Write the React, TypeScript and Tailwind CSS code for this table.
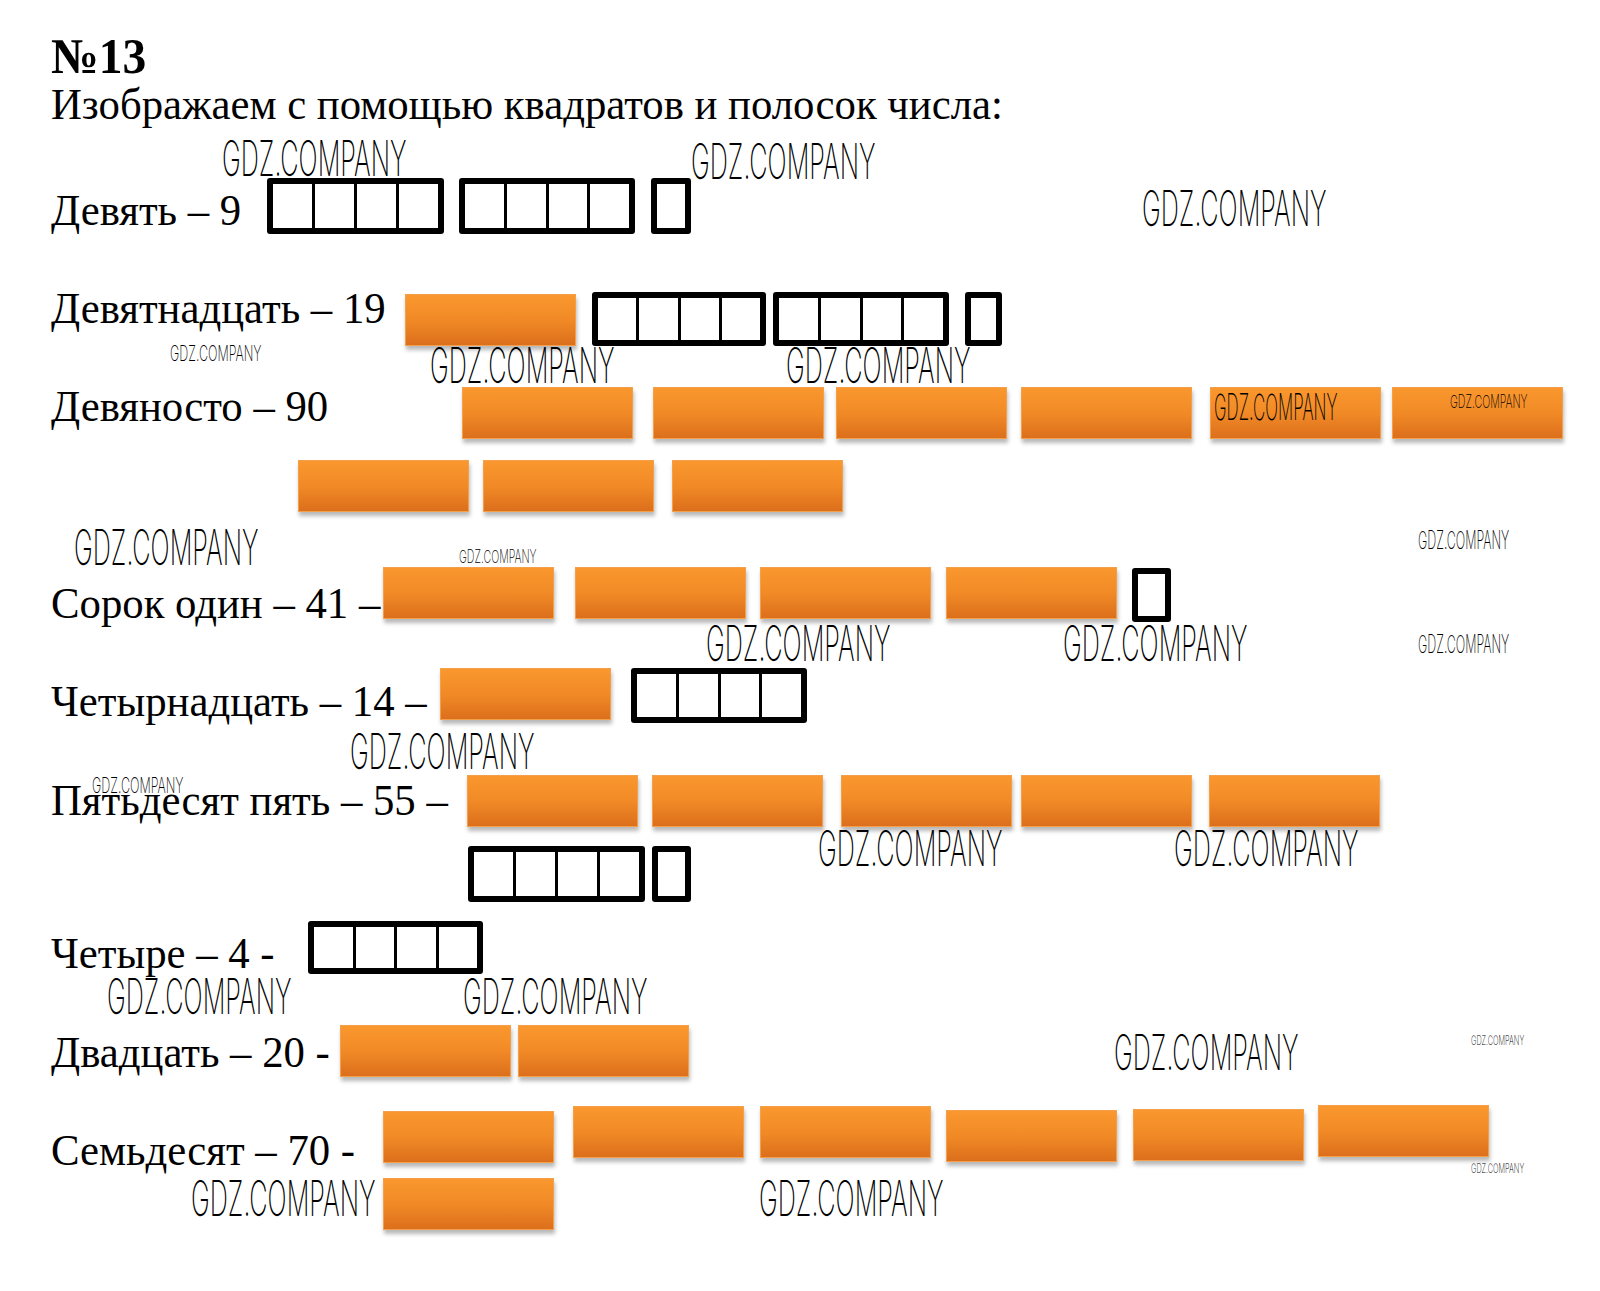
import React from "react";

const serif = "font-['Liberation_Serif',serif]";

const Bar = ({ cls = "" }: { cls?: string }) => (
  <div
    className={`h-[52px] w-[171px] shrink-0 border border-[#f4a04a] bg-linear-to-b from-[#fa972e] via-[#f18a26] to-[#dc6f1c] shadow-[1px_4px_4px_rgba(0,0,0,0.28)] ${cls}`}
  />
);

const Cells = ({ n, cls = "" }: { n: number; cls?: string }) => (
  <div className={`flex shrink-0 rounded-[3px] border-[6px] border-black bg-white ${cls}`}>
    {Array.from({ length: n }).map((_, i) => (
      <div key={i} className={i > 0 ? "flex-1 border-l-[3px] border-black" : "flex-1"} />
    ))}
  </div>
);

const Label = ({ children, cls = "" }: { children: React.ReactNode; cls?: string }) => (
  <div className={`shrink-0 whitespace-nowrap text-[45px] leading-none ${serif} ${cls}`}>
    <div className="origin-left scale-x-[0.95]">{children}</div>
  </div>
);

type V = "L" | "M" | "S" | "S2" | "XS" | "XXS";
const vcls: Record<V, string> = {
  L: "text-[49px] scale-x-[0.516]",
  M: "text-[36px] scale-x-[0.47]",
  S: "text-[22px] scale-x-[0.57]",
  S2: "text-[25px] scale-x-[0.5]",
  XS: "text-[18px] scale-x-[0.59]",
  XXS: "text-[13px] scale-x-[0.56]",
};

const Wm = ({ v, pos }: { v: V; pos: string }) => (
  <div
    className={`pointer-events-none absolute origin-left whitespace-nowrap font-['Inter',sans-serif] font-extralight leading-none text-black ${vcls[v]} ${pos}`}
  >
    GDZ.COMPANY
  </div>
);

export default function App() {
  return (
    <div className="relative h-[1291px] w-[1600px] overflow-hidden bg-white pl-[51px] pt-[31px] text-black">
      <div className={`h-[50px] origin-left scale-x-[0.95] text-[50px] font-bold leading-none ${serif}`}>№13</div>
      <div className={`mt-[1px] origin-left scale-x-[0.95] text-[45px] leading-none ${serif}`}>
        Изображаем с помощью квадратов и полосок числа:
      </div>

      {/* Девять */}
      <div className="mt-[51px] flex items-start">
        <Label cls="mt-[10px] w-[216px]">Девять – 9</Label>
        <Cells n={4} cls="h-[56px] w-[177px]" />
        <Cells n={4} cls="ml-[15px] h-[56px] w-[176px]" />
        <Cells n={1} cls="ml-[16px] h-[56px] w-[40px]" />
      </div>

      {/* Девятнадцать */}
      <div className="mt-[52px] flex items-start">
        <Label cls="w-[354px]">Девятнадцать – 19</Label>
        <Bar cls="mt-[8px]" />
        <Cells n={4} cls="ml-[16px] mt-[6px] h-[54px] w-[174px]" />
        <Cells n={4} cls="ml-[7px] mt-[6px] h-[54px] w-[176px]" />
        <Cells n={1} cls="ml-[16px] mt-[6px] h-[54px] w-[37px]" />
      </div>

      {/* Девяносто */}
      <div className="mt-[38px] flex items-start">
        <Label cls="w-[411px]">Девяносто – 90</Label>
        <Bar cls="mt-[3px]" />
        <Bar cls="ml-[20px] mt-[3px]" />
        <Bar cls="ml-[12px] mt-[3px]" />
        <Bar cls="ml-[14px] mt-[3px]" />
        <Bar cls="ml-[18px] mt-[3px]" />
        <Bar cls="ml-[11px] mt-[3px]" />
      </div>
      <div className="ml-[247px] mt-[21px] flex items-start">
        <Bar />
        <Bar cls="ml-[14px]" />
        <Bar cls="ml-[18px]" />
      </div>

      {/* Сорок один */}
      <div className="mt-[55px] flex items-start">
        <Label cls="mt-[14px] w-[332px]">Сорок один – 41 –</Label>
        <Bar />
        <Bar cls="ml-[21px]" />
        <Bar cls="ml-[14px]" />
        <Bar cls="ml-[15px]" />
        <Cells n={1} cls="ml-[15px] mt-[1px] h-[54px] w-[39px]" />
      </div>

      {/* Четырнадцать */}
      <div className="mt-[42px] flex items-start">
        <Label cls="mt-[11px] w-[389px]">Четырнадцать – 14 –</Label>
        <Bar />
        <Cells n={4} cls="ml-[20px] h-[55px] w-[176px]" />
      </div>

      {/* Пятьдесят пять */}
      <div className="mt-[51px] flex items-start">
        <Label cls="mt-[3px] w-[416px]">Пятьдесят пять – 55 –</Label>
        <Bar />
        <Bar cls="ml-[14px]" />
        <Bar cls="ml-[18px]" />
        <Bar cls="ml-[9px]" />
        <Bar cls="ml-[17px]" />
      </div>
      <div className="ml-[417px] mt-[19px] flex items-start">
        <Cells n={4} cls="h-[56px] w-[177px]" />
        <Cells n={1} cls="ml-[7px] h-[56px] w-[39px]" />
      </div>

      {/* Четыре */}
      <div className="mt-[19px] flex items-start">
        <Label cls="mt-[10px] w-[257px]">Четыре – 4 -</Label>
        <Cells n={4} cls="h-[53px] w-[175px]" />
      </div>

      {/* Двадцать */}
      <div className="mt-[49px] flex items-start">
        <Label cls="mt-[5px] w-[289px]">Двадцать – 20 -</Label>
        <Bar />
        <Bar cls="ml-[7px]" />
      </div>

      {/* Семьдесят */}
      <div className="mt-[28px] flex items-start">
        <Label cls="mt-[23px] w-[332px]">Семьдесят – 70 -</Label>
        <Bar cls="mt-[6px]" />
        <Bar cls="ml-[19px] mt-[1px]" />
        <Bar cls="ml-[16px] mt-[1px]" />
        <Bar cls="ml-[15px] mt-[5px]" />
        <Bar cls="ml-[16px] mt-[4px]" />
        <Bar cls="ml-[14px]" />
      </div>
      <div className="ml-[332px] mt-[5px] flex items-start">
        <Bar />
      </div>

      {/* watermarks */}
      <Wm v="L" pos="left-[222px] top-[134px]" />
      <Wm v="L" pos="left-[691px] top-[137px]" />
      <Wm v="L" pos="left-[1142px] top-[184px]" />
      <Wm v="S" pos="left-[170px] top-[342px]" />
      <Wm v="L" pos="left-[430px] top-[341px]" />
      <Wm v="L" pos="left-[786px] top-[341px]" />
      <Wm v="M" pos="left-[1214px] top-[389px]" />
      <Wm v="XS" pos="left-[1450px] top-[393px]" />
      <Wm v="L" pos="left-[74px] top-[523px]" />
      <Wm v="XS" pos="left-[459px] top-[548px]" />
      <Wm v="S2" pos="left-[1418px] top-[528px]" />
      <Wm v="L" pos="left-[706px] top-[619px]" />
      <Wm v="L" pos="left-[1063px] top-[619px]" />
      <Wm v="S2" pos="left-[1418px] top-[632px]" />
      <Wm v="L" pos="left-[350px] top-[727px]" />
      <Wm v="S" pos="left-[92px] top-[774px]" />
      <Wm v="L" pos="left-[818px] top-[824px]" />
      <Wm v="L" pos="left-[1174px] top-[824px]" />
      <Wm v="L" pos="left-[107px] top-[972px]" />
      <Wm v="L" pos="left-[463px] top-[972px]" />
      <Wm v="L" pos="left-[1114px] top-[1028px]" />
      <Wm v="XXS" pos="left-[1471px] top-[1034px]" />
      <Wm v="XXS" pos="left-[1471px] top-[1162px]" />
      <Wm v="L" pos="left-[191px] top-[1174px]" />
      <Wm v="L" pos="left-[759px] top-[1174px]" />
    </div>
  );
}
